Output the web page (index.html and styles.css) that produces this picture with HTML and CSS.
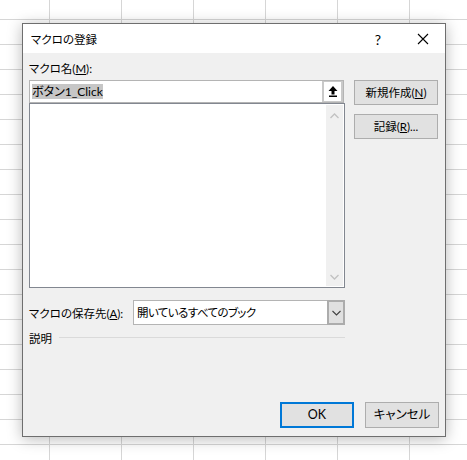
FILE: index.html
```html
<!DOCTYPE html>
<html lang="ja">
<head>
<meta charset="utf-8">
<title>マクロの登録</title>
<link rel="stylesheet" href="styles.css">
</head>
<body>
<div class="dialog">
  <div class="titlebar">
    <span class="title">マクロの登録</span>
    <span class="help">?</span>
    <svg class="close" width="12" height="12" viewBox="0 0 12 12"><path d="M1 1L11 11M11 1L1 11" stroke="#000" stroke-width="1.1" fill="none"/></svg>
  </div>
  <div class="content">
    <div class="main">
      <div class="left">
        <div class="label">マクロ名(<u>M</u>):</div>
        <div class="namebox">
          <div class="nametext"><span class="sel">ボタン1_Click</span></div>
          <div class="upbtn">
            <div class="upinner">
              <svg width="10" height="11" viewBox="0 0 10 11"><path d="M5 0L9.5 5H6.5V8.5H3.5V5H0.5Z" fill="#000"/><rect x="1" y="9.5" width="8" height="1.5" fill="#000"/></svg>
            </div>
          </div>
        </div>
        <div class="listbox">
          <div class="listarea"></div>
          <div class="scroll">
            <svg width="9" height="6" viewBox="0 0 9 6"><path d="M0.5 5L4.5 1L8.5 5" stroke="#c2c2c2" stroke-width="1.3" fill="none"/></svg>
            <svg width="9" height="6" viewBox="0 0 9 6"><path d="M0.5 1L4.5 5L8.5 1" stroke="#c2c2c2" stroke-width="1.3" fill="none"/></svg>
          </div>
        </div>
        <div class="saverow">
          <span class="savelabel">マクロの保存先(<u>A</u>):</span>
          <div class="combo">
            <span class="combotext">開いているすべてのブック</span>
            <div class="dropbtn">
              <svg width="9" height="6" viewBox="0 0 9 6"><path d="M0.5 1L4.5 5L8.5 1" stroke="#404040" stroke-width="1.1" fill="none"/></svg>
            </div>
          </div>
        </div>
        <div class="descrow">
          <span>説明</span>
          <div class="rule"></div>
        </div>
      </div>
      <div class="right">
        <button class="btn">新規作成(<u>N</u>)</button>
        <button class="btn">記録(<u>R</u>)...</button>
      </div>
    </div>
    <div class="footer">
      <button class="btn ok">OK</button>
      <button class="btn">キャンセル</button>
    </div>
  </div>
</div>
</body>
</html>
```
FILE: styles.css
```css
html, body {
  margin: 0;
  padding: 0;
}
body {
  width: 467px;
  height: 460px;
  overflow: hidden;
  background-color: #fff;
  background-image:
    linear-gradient(to right, #d6d6d6 1px, transparent 1px),
    linear-gradient(to bottom, #d6d6d6 1px, transparent 1px);
  background-size: 72px 100%, 100% 25px;
  background-position: 49px 0, 0 19px;
  font-family: Lato, "Noto Sans CJK JP", sans-serif;
  font-feature-settings: "palt";
  font-size: 11.5px;
  color: #000;
  padding-top: 23px;
  padding-left: 22px;
  box-sizing: border-box;
}
u { text-decoration: underline; text-underline-offset: 1px; }
.dialog {
  width: 424px;
  height: 414px;
  box-sizing: border-box;
  border: 1px solid #6e6e6e;
  background: #f0f0f0;
  box-shadow: 0 2px 14px rgba(0,0,0,0.28);
  display: flex;
  flex-direction: column;
}
.titlebar {
  height: 29px;
  background: #fff;
  display: flex;
  align-items: center;
  padding-left: 8px;
  flex: none;
}
.title { flex: 1; padding-top: 1px; }
.help { font-size: 14px; margin-right: 36px; padding-top: 1px; }
.close { margin-right: 16px; }
.content {
  flex: 1;
  display: flex;
  flex-direction: column;
  padding: 7px 6px 8px 6px;
}
.main { display: flex; flex: 1; }
.left { width: 316px; display: flex; flex-direction: column; }
.label { height: 20px; line-height: 18px; }
.namebox {
  width: 315px;
  height: 23px;
  box-sizing: border-box;
  border: 1px solid #b4b4b4;
  background: #fff;
  display: flex;
}
.nametext { flex: 1; padding-left: 2px; display: flex; align-items: center; }
.sel { background: #c6c6c6; line-height: 15px; font-size: 12px; }
.upbtn {
  width: 21px;
  background: #c9c9c9;
  padding: 1px 2px 1px 2px;
  box-sizing: border-box;
  display: flex;
}
.upinner {
  flex: 1;
  background: #fff;
  display: flex;
  align-items: center;
  justify-content: center;
}
.listbox {
  margin-top: 0;
  height: 185px;
  box-sizing: border-box;
  border: 1px solid #828790;
  background: #fff;
  display: flex;
}
.listarea { flex: 1; }
.scroll {
  width: 17px;
  margin: 1px 1px 1px 0;
  background: #f0f0f0;
  display: flex;
  flex-direction: column;
  justify-content: space-between;
  align-items: center;
  padding: 8px 0 6px;
}
.saverow {
  margin-top: 12px;
  display: flex;
  align-items: center;
  height: 25px;
}
.savelabel { width: 104px; }
.combo {
  width: 212px;
  height: 25px;
  box-sizing: border-box;
  border: 1px solid #b4b4b4;
  background: #fff;
  display: flex;
}
.combotext { flex: 1; padding-left: 3px; line-height: 23px; letter-spacing: -0.6px; }
.dropbtn {
  width: 18px;
  box-sizing: border-box;
  border: 2px solid #acacac;
  margin: -1px -1px -1px 0;
  background: #e0e0e0;
  display: flex;
  align-items: center;
  justify-content: center;
}
.descrow {
  display: flex;
  align-items: center;
  margin-top: 2px;
  height: 22px;
}
.rule { flex: 1; height: 1px; background: #dadada; margin-left: 7px; margin-top: -1px; }
.right {
  margin-left: 9px;
  padding-top: 20px;
  display: flex;
  flex-direction: column;
  gap: 9px;
}
.btn {
  font-family: Lato, "Noto Sans CJK JP", sans-serif;
  font-feature-settings: "palt";
  font-size: 11.5px;
  color: #000;
  width: 84px;
  height: 25px;
  box-sizing: border-box;
  border: 1px solid #adadad;
  background: #e1e1e1;
  padding: 0;
  margin: 0;
  line-height: 22px;
}
.footer {
  display: flex;
  justify-content: flex-end;
  gap: 11px;
}
.footer .btn { width: 74px; height: 26px; font-size: 12.5px; }
.btn.ok { border: 2px solid #0078d7; }
```
